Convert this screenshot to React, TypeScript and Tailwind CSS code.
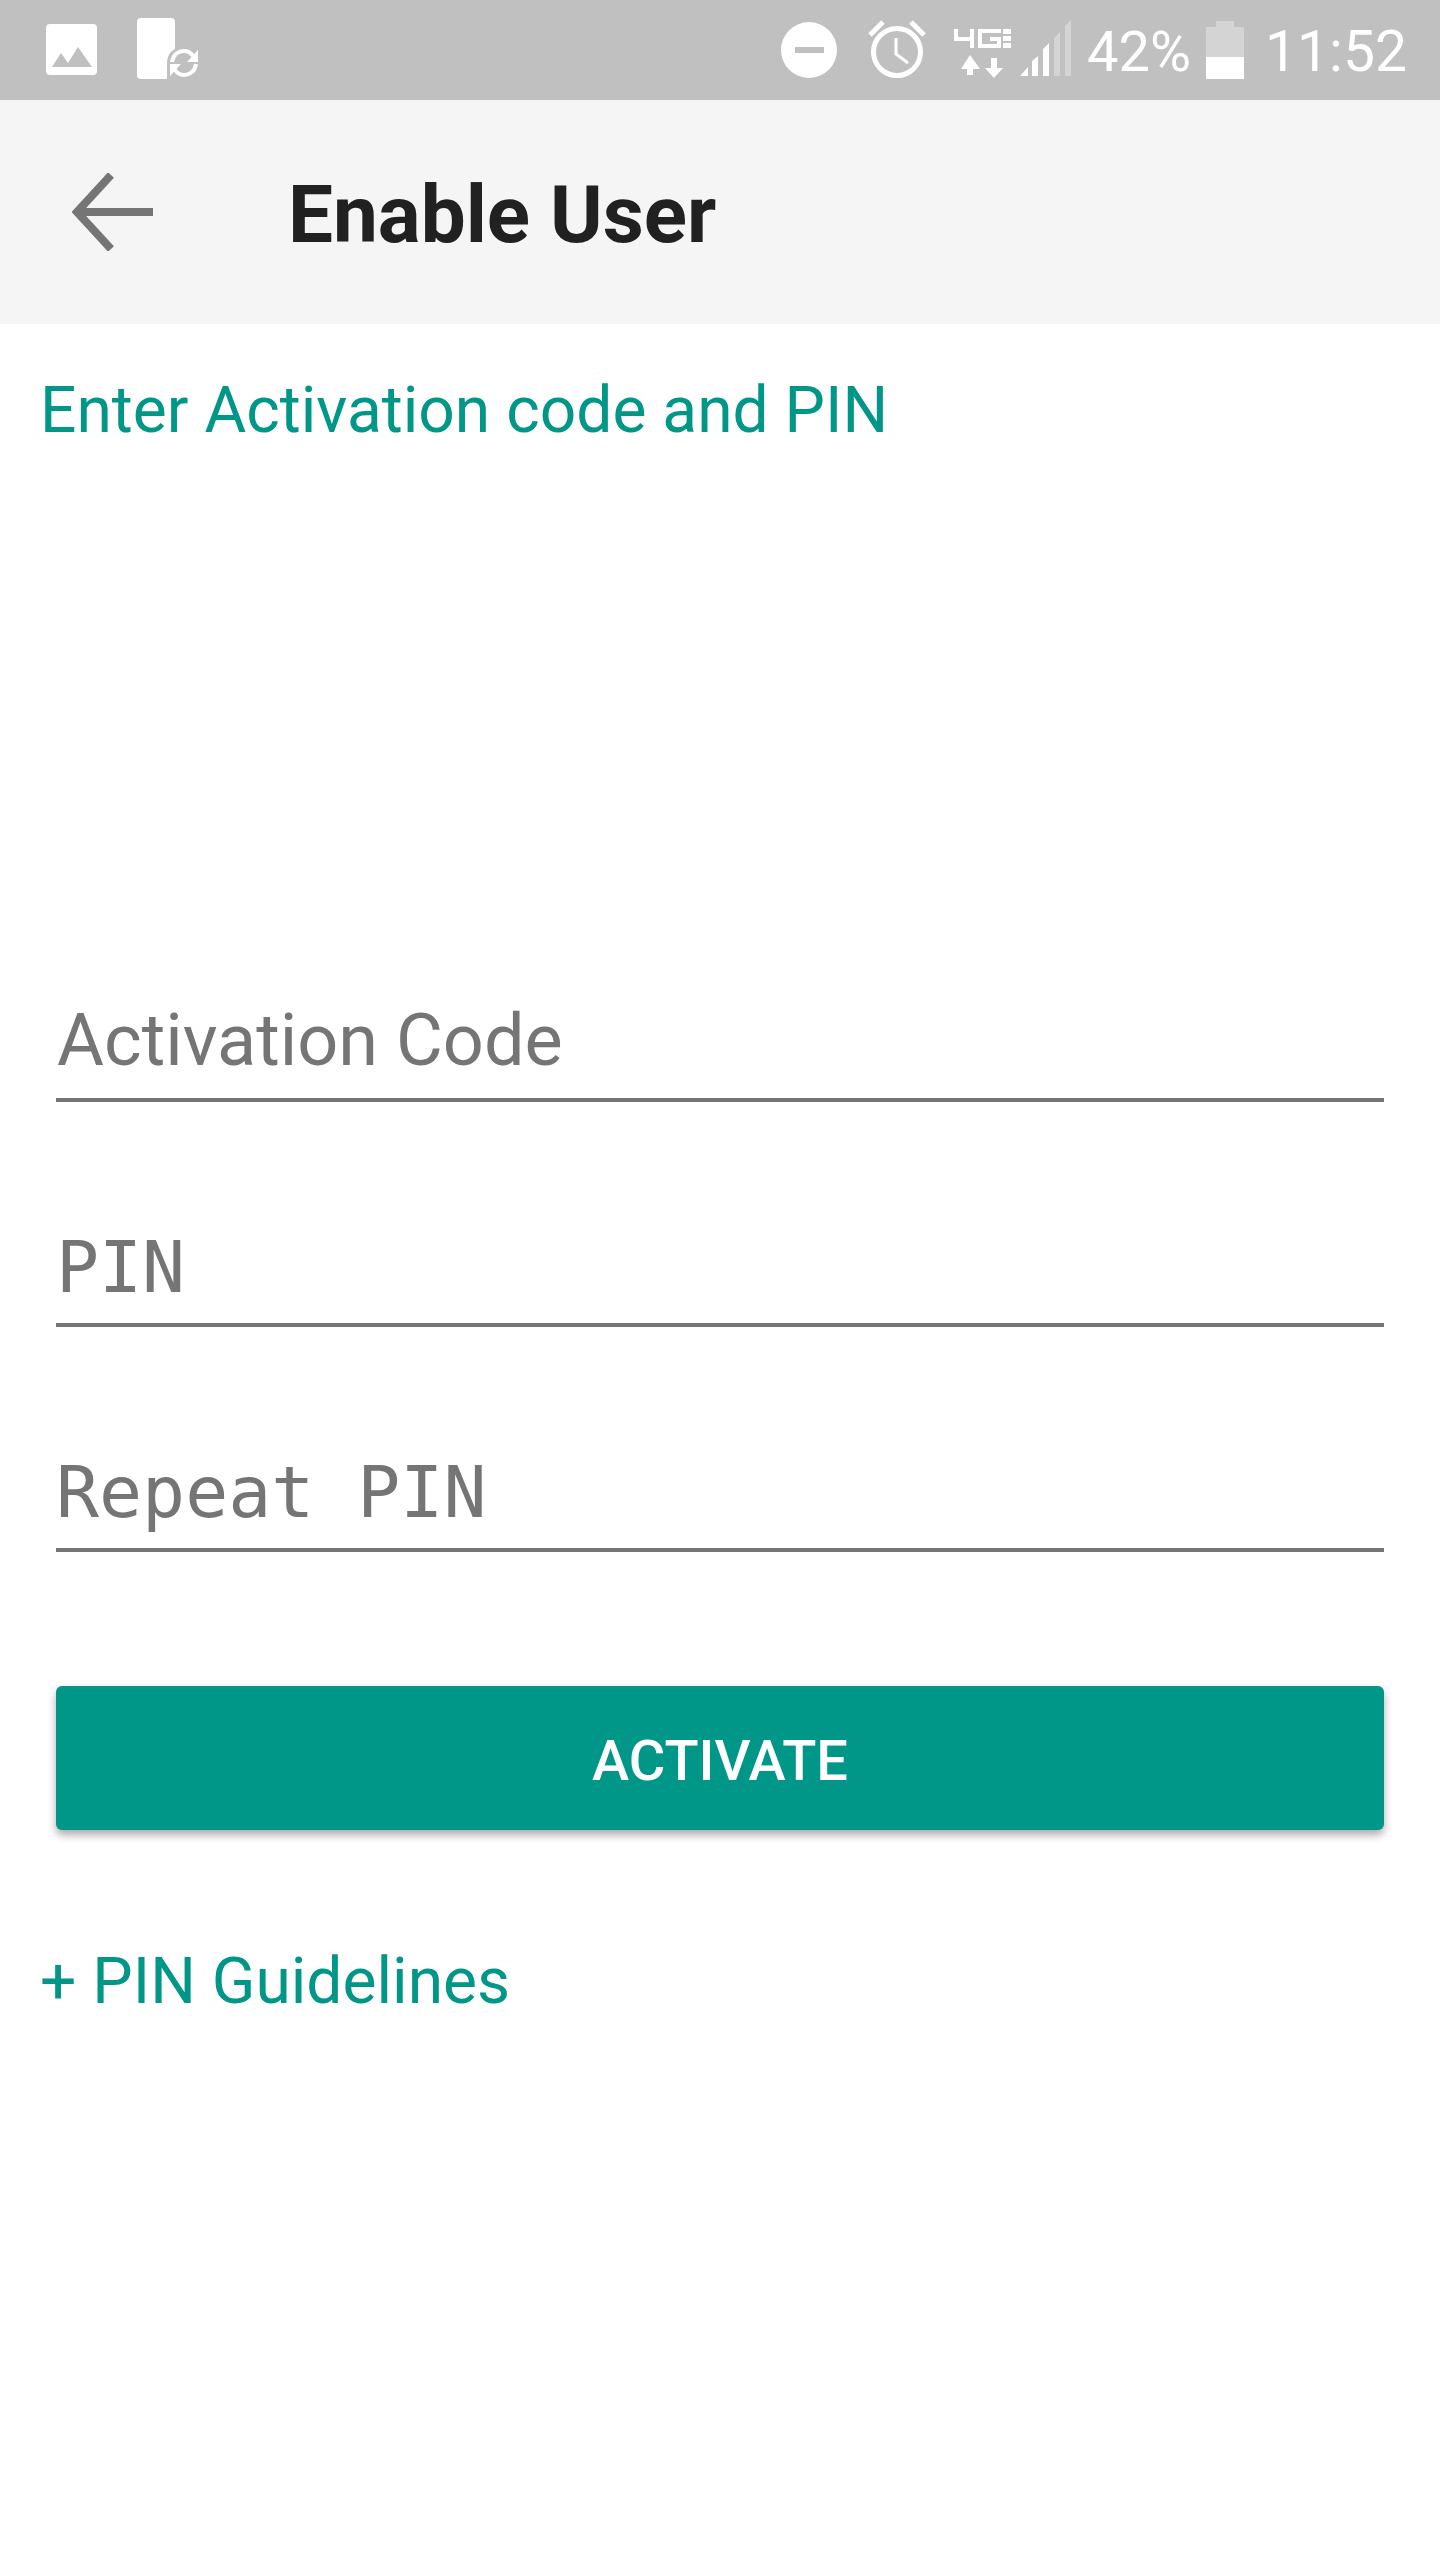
import { FC } from 'react';

const ROBOTO = 'font-[Roboto,sans-serif]';

const ImageNotification: FC = () => (
    <svg width="52" height="52" viewBox="0 0 52 52">
        <rect x="0" y="0" width="51" height="51" rx="4" fill="#fff" />
        <path d="M6 43 L15 29 L22 39 L32 23 L46 43 Z" fill="#c0c0c0" />
    </svg>
);

const SyncNotification: FC = () => (
    <svg width="64" height="62" viewBox="0 0 64 62">
        <path
            d="M4 0 H34 a4 4 0 0 1 4 4 V31 C32 34 30 40 30 46 V61 H4 a4 4 0 0 1 -4 -4 V4 a4 4 0 0 1 4 -4 Z"
            fill="#fff"
        />
        <path
            d="M35 44 C36 36 42 33 47 33 C51 33 54 35 56 38 M59 46 C58 54 52 57 47 57 C43 57 40 55 38 52"
            fill="none"
            stroke="#fff"
            strokeWidth="4"
        />
        <path d="M61 32 V44 H50 Z M33 58 V46 H44 Z" fill="#fff" />
    </svg>
);

const StatusIcons: FC = () => (
    <svg width="146" height="70" viewBox="0 0 146 70">
        {/* do not disturb */}
        <circle cx="29" cy="35" r="28" fill="#fff" />
        <rect x="15" y="32" width="29" height="6" fill="#c0c0c0" />
        {/* alarm */}
        <circle cx="117" cy="37" r="23.5" fill="none" stroke="#fff" strokeWidth="5" />
        <path d="M116 23 V39 L128 48" fill="none" stroke="#fff" strokeWidth="3" />
        <path d="M90 20 L103 7 M144 20 L131 7" fill="none" stroke="#fff" strokeWidth="5" />
    </svg>
);

const NetworkIcon: FC = () => (
    <svg width="120" height="62" viewBox="0 0 120 62">
        {/* 4G LTE */}
        <path d="M2 10 V20 H20 M18 10 V29" fill="none" stroke="#fff" strokeWidth="4" />
        <path d="M47 12 H26 V27 H45 V20 H36" fill="none" stroke="#fff" strokeWidth="4" />
        <path d="M49 10 H57 V15 H49 Z M49 17 H57 V22 H49 Z M49 24 H57 V29 H49 Z" fill="#fff" />
        {/* up and down arrows */}
        <path d="M7 50 L16 36 L26 50 H19 V56 H13 V50 Z" fill="#fff" />
        <path d="M37 39 H43 V49 H49 L40 59 L31 49 H37 Z" fill="#fff" />
        {/* signal bars */}
        <path d="M66 57 L74 48 V57 Z M78 57 V42 L84 37 V57 Z M89 57 V30 L95 24 V57 Z" fill="#fff" />
        <path d="M100 57 V19 L106 13 V57 Z M111 57 V7 L117 1 V57 Z" fill="#d4d4d4" />
    </svg>
);

const BatteryIcon: FC = () => (
    <svg width="38" height="58" viewBox="0 0 38 58">
        <path d="M10 0 H28 V6 H38 V58 H0 V6 H10 Z" fill="#d4d4d4" />
        <rect x="0" y="36" width="38" height="22" fill="#fff" />
    </svg>
);

const Field: FC<{ label: string; mono?: boolean }> = ({ label, mono }) => (
    <div
        className={`flex h-[100px] items-end border-b-[4px] border-[#757575] leading-[90px] text-[#757575] ${
            mono
                ? 'pb-[10px] text-[71.5px] font-["DejaVu_Sans_Mono",monospace]'
                : `pb-[12px] pl-[1px] text-[72px] ${ROBOTO}`
        }`}>
        {label}
    </div>
);

export default function App() {
    return (
        <div className={`min-h-[2560px] w-[1440px] bg-white ${ROBOTO}`}>
            <div className="flex h-[100px] items-center bg-[#c0c0c0] pl-[46px] pr-[33px] text-white">
                <ImageNotification />
                <div className="ml-[39px] mt-[-2px]">
                    <SyncNotification />
                </div>
                <div className="ml-auto flex items-center">
                    <StatusIcons />
                    <div className="ml-[28px]">
                        <NetworkIcon />
                    </div>
                    <span className="ml-[13px] mt-[3px] text-[56px] leading-none">42%</span>
                    <div className="ml-[15px]">
                        <BatteryIcon />
                    </div>
                    <span className="ml-[21px] mt-[3px] text-[57px] leading-none">11:52</span>
                </div>
            </div>

            <div className="flex h-[224px] items-center bg-[#f5f5f5] pl-[72px]">
                <svg width="82" height="78" viewBox="0 0 82 78">
                    <path
                        d="M81 39 H5 M39 2 L5 39 L39 76"
                        fill="none"
                        stroke="#757575"
                        strokeWidth="8"
                    />
                </svg>
                <h1 className="ml-[134px] mt-[5px] text-[80px] font-bold leading-none text-[#212121]">
                    Enable User
                </h1>
            </div>

            <div className="pl-[40px] pt-[51px] text-[64.1px] leading-[72px] text-[#009688]">
                Enter Activation code and PIN
            </div>

            <div className="mt-[555px] flex flex-col gap-[125px] px-[56px]">
                <Field label="Activation Code" />
                <Field label="PIN" mono />
                <Field label="Repeat PIN" mono />
            </div>

            <div className="mx-[56px] mt-[134px] flex h-[144px] items-center justify-center rounded-[6px] bg-[#009688] pt-[6px] text-[56px] font-medium text-white shadow-[0_5px_8px_rgba(0,0,0,0.33)]">
                ACTIVATE
            </div>

            <div className="mt-[116px] pl-[40px] text-[64.1px] leading-[72px] text-[#009688]">
                + PIN Guidelines
            </div>
        </div>
    );
}
